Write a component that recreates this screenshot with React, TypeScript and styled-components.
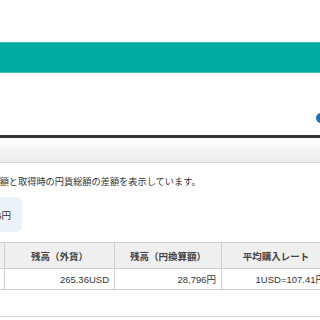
import React from 'react';
import styled, { createGlobalStyle } from 'styled-components';

const GlobalStyle = createGlobalStyle`
  html, body {
    margin: 0;
    padding: 0;
    background: #fff;
    overflow: hidden;
  }
  body {
    font-family: "Liberation Sans", "Noto Sans CJK JP", sans-serif;
    color: #333;
  }
`;

const Page = styled.div`
  width: 320px;
  height: 320px;
  overflow: hidden;
  padding-top: 42px;
  box-sizing: border-box;
`;

const Band = styled.div`
  height: 31px;
  box-sizing: border-box;
  background: #00ab9f;
  border-top: 1px solid #3fbdb3;
  border-bottom: 1px solid #3fbdb3;
`;

const TitleRow = styled.div`
  height: 62px;
  display: flex;
  justify-content: flex-end;
  align-items: flex-end;
  padding-bottom: 12px;
  box-sizing: border-box;
  margin-right: -6px;
`;

const HelpIcon = styled.span`
  width: 10px;
  height: 10px;
  border-radius: 50%;
  background: #1a72c2;
`;

const Panel = styled.section`
  margin-left: -100px;
  width: 540px;
  border-top: 3px solid #333;
  border-bottom: 1px solid #d4d4d4;
`;

const PanelHead = styled.div`
  height: 24px;
  background: linear-gradient(#ffffff, #ececec);
  border-bottom: 1px solid #d6d6d6;
`;

const PanelBody = styled.div`
  padding: 12px 8px 26px 8px;
`;

const Note = styled.p`
  margin: 0;
  padding-left: 9px;
  font-size: 9.2px;
  line-height: 14px;
  white-space: nowrap;
`;

const Summary = styled.div`
  margin-top: 8px;
  width: 114px;
  height: 35px;
  box-sizing: border-box;
  padding-right: 11px;
  border-radius: 5px;
  background: #edf2f6;
  display: flex;
  align-items: center;
  justify-content: flex-end;
  font-size: 9.5px;
  white-space: nowrap;
`;

const Table = styled.table`
  margin-top: 10px;
  border-collapse: collapse;
  font-size: 9.5px;
  table-layout: fixed;
`;

const Th = styled.th<{ $w: number }>`
  width: ${(p) => p.$w}px;
  height: 26px;
  padding: 0 5px;
  box-sizing: border-box;
  background: #efefef;
  border: 1px solid #cfcfcf;
  font-weight: bold;
  color: #444;
  text-align: center;
  white-space: nowrap;
`;

const Td = styled.td`
  height: 21px;
  padding: 0 5px;
  box-sizing: border-box;
  border: 1px solid #cfcfcf;
  text-align: right;
  white-space: nowrap;
  color: #333;
`;

export default function App() {
  return (
    <Page>
      <GlobalStyle />
      <Band />
      <TitleRow>
        <HelpIcon />
      </TitleRow>
      <Panel>
        <PanelHead />
        <PanelBody>
          <Note>評価損益は、円換算額と取得時の円貨総額の差額を表示しています。</Note>
          <Summary>+1,316円</Summary>
          <Table>
            <thead>
              <tr>
                <Th $w={96}>通貨</Th>
                <Th $w={110}>残高（外貨）</Th>
                <Th $w={107}>残高（円換算額）</Th>
                <Th $w={109}>平均購入レート</Th>
              </tr>
            </thead>
            <tbody>
              <tr>
                <Td>米ドル</Td>
                <Td>265.36USD</Td>
                <Td>28,796円</Td>
                <Td>1USD=107.41円</Td>
              </tr>
            </tbody>
          </Table>
        </PanelBody>
      </Panel>
    </Page>
  );
}
